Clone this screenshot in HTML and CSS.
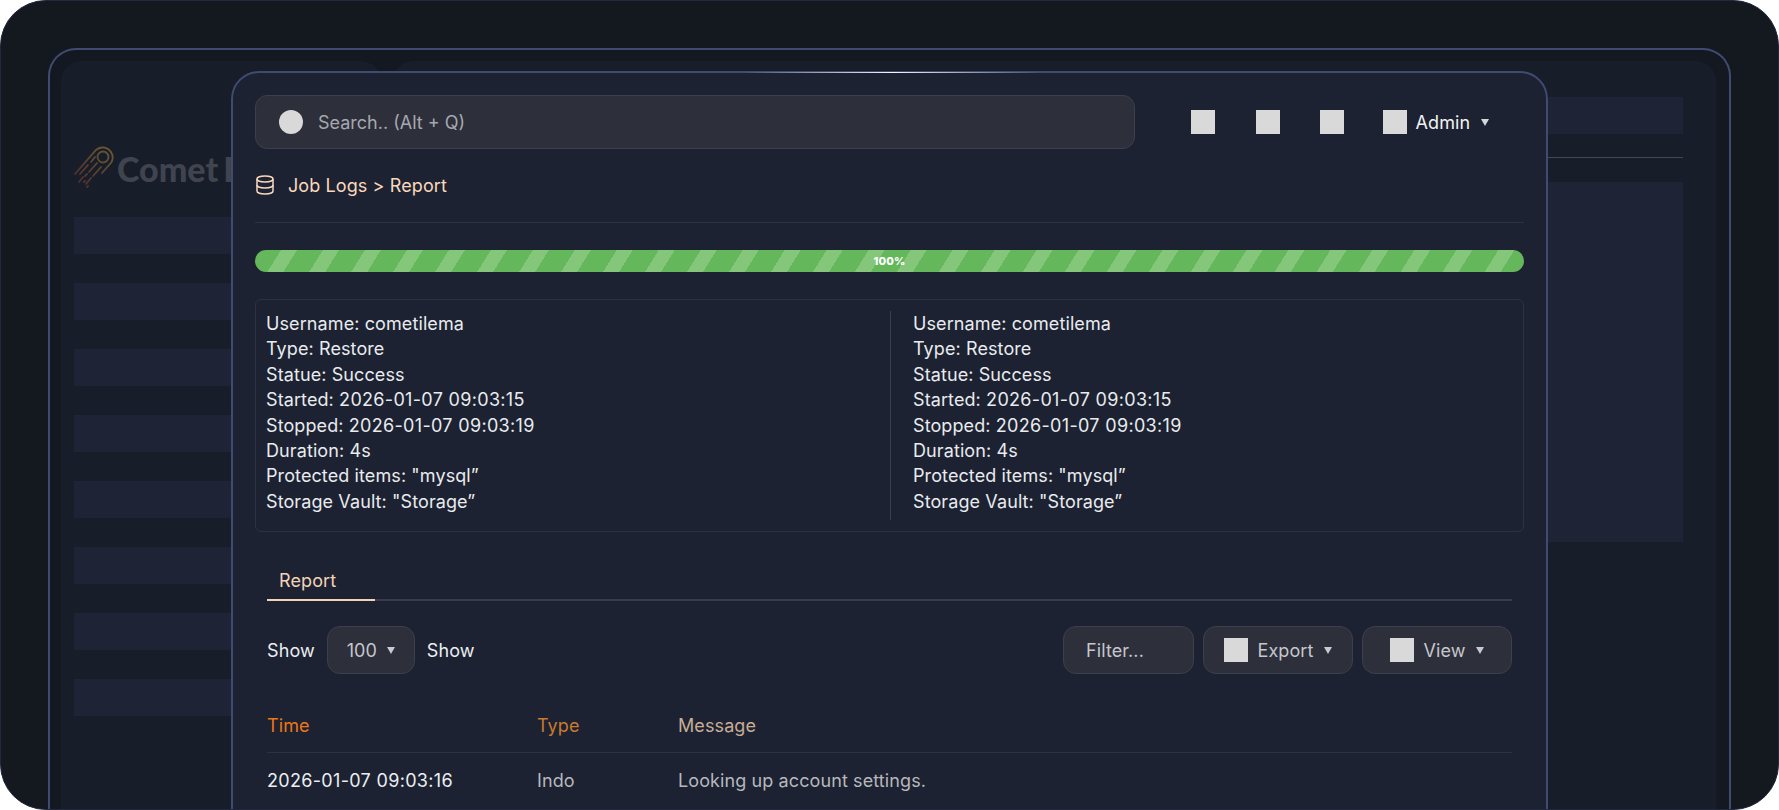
FILE: index.html
```html
<!DOCTYPE html>
<html lang="en">
<head>
<meta charset="utf-8">
<title>Job Logs Report</title>
<link rel="stylesheet" href="styles.css">
</head>
<body>
<div class="stage">
  <div class="frame">
    <aside class="side">
      <div class="logo">
        <svg class="comet" viewBox="0 0 40 42" fill="none" stroke-width="1.8" stroke-linecap="round">
          <defs>
            <linearGradient id="cg" x1="38" y1="2" x2="2" y2="40" gradientUnits="userSpaceOnUse">
              <stop offset="0" stop-color="#6b5a35"/>
              <stop offset="1" stop-color="#4e2a2a"/>
            </linearGradient>
          </defs>
          <g stroke="url(#cg)">
            <circle cx="29" cy="11" r="5.5"/>
            <path d="M38 15a10 10 0 0 0-16-11L1 28"/>
            <path d="M38 15a10 10 0 0 1-2 3L28 27"/>
            <path d="M21 11l-4 5M14 19l-8 9"/>
            <path d="M23 17l-8 9M13 28l-2 2"/>
            <path d="M27 21l-8 9M17 32l-5 6"/>
            <path d="M9 31l-4 5M11 35l-1 1M13 41l1-1"/>
          </g>
        </svg>
        <span class="logo-text">Comet Backup</span>
      </div>
      <div class="side-list">
        <div class="side-bar"></div>
        <div class="side-bar"></div>
        <div class="side-bar"></div>
        <div class="side-bar"></div>
        <div class="side-bar"></div>
        <div class="side-bar"></div>
        <div class="side-bar"></div>
        <div class="side-bar"></div>
      </div>
    </aside>
    <section class="main">
      <div class="main-top"></div>
      <div class="main-rule"></div>
      <div class="main-block"></div>
    </section>
  </div>

  <div class="modal">
    <div class="gleam"></div>
    <header class="top">
      <div class="search">
        <span class="dot"></span>
        <span>Search.. (Alt + Q)</span>
      </div>
      <div class="top-icons">
        <span class="sq"></span>
        <span class="sq"></span>
        <span class="sq"></span>
        <div class="admin">
          <span class="sq"></span>
          <span>Admin</span>
          <span class="caret caret-white"></span>
        </div>
      </div>
    </header>

    <div class="crumb">
      <svg class="db" viewBox="0 0 20 20" fill="none" stroke="#f9d9bd" stroke-width="1.5">
        <ellipse cx="10" cy="4" rx="8" ry="3"/>
        <path d="M2 4v12c0 1.700 3.600 3 8 3s8-1.300 8-3V4"/>
        <path d="M2 10c0 1.700 3.600 3 8 3s8-1.300 8-3"/>
      </svg>
      <span>Job Logs &gt; Report</span>
    </div>

    <div class="progress"><span>100%</span></div>

    <div class="info">
      <div class="info-col">
        <div>Username: cometilema</div>
        <div>Type: Restore</div>
        <div>Statue: Success</div>
        <div>Started: <span class="num">2026-01-07 09:03:15</span></div>
        <div>Stopped: <span class="num">2026-01-07 09:03:19</span></div>
        <div>Duration: 4s</div>
        <div>Protected items: "mysql”</div>
        <div>Storage Vault: "Storage”</div>
      </div>
      <div class="info-col info-right">
        <div>Username: cometilema</div>
        <div>Type: Restore</div>
        <div>Statue: Success</div>
        <div>Started: <span class="num">2026-01-07 09:03:15</span></div>
        <div>Stopped: <span class="num">2026-01-07 09:03:19</span></div>
        <div>Duration: 4s</div>
        <div>Protected items: "mysql”</div>
        <div>Storage Vault: "Storage”</div>
      </div>
    </div>

    <div class="panel">
      <div class="tabs"><span class="tab">Report</span></div>

      <div class="tools">
        <div class="tools-left">
          <span>Show</span>
          <div class="ctl ctl-num"><span>100</span><span class="caret"></span></div>
          <span>Show</span>
        </div>
        <div class="tools-right">
          <div class="ctl ctl-filter">Filter...</div>
          <div class="ctl ctl-btn"><span class="sq"></span><span>Export</span><span class="caret"></span></div>
          <div class="ctl ctl-btn"><span class="sq"></span><span>View</span><span class="caret"></span></div>
        </div>
      </div>

      <div class="row row-head">
        <span class="c-time h-time">Time</span>
        <span class="c-type h-type">Type</span>
        <span class="h-msg">Message</span>
      </div>
      <div class="row row-body">
        <span class="c-time num">2026-01-07 09:03:16</span>
        <span class="c-type muted">Indo</span>
        <span class="muted">Looking up account settings.</span>
      </div>
    </div>
  </div>
</div>
</body>
</html>
```
FILE: styles.css
```css
* { box-sizing: border-box; }
html, body { margin: 0; height: 100%; background: #fff; }
body { font-family: Inter, "Liberation Sans", sans-serif; font-size: 18px; letter-spacing: .1px; color: #eceef2; overflow: hidden; }

.stage {
  position: relative;
  width: 1779px;
  height: 810px;
  padding: 47px 47px 0;
  background: #14181f;
  border: 1px solid #222840;
  border-radius: 46px;
  overflow: hidden;
}
.frame {
  display: flex;
  gap: 12px;
  width: 1683px;
  height: 762px;
  padding: 11px 13px 0 11px;
  background: #141821;
  border: 2px solid #404b72;
  border-bottom: 0;
  border-radius: 28px 28px 0 0;
}
.side {
  width: 320px;
  padding: 85px 0 0 13px;
  background: #181d2a;
  border-radius: 20px 20px 0 0;
  overflow: hidden;
}
.logo { display: flex; align-items: center; gap: 3px; height: 41px; white-space: nowrap; }
.comet { width: 40px; height: 42px; flex: none; }
.logo-text { margin-top: 4px; font-family: Lato, sans-serif; font-weight: 900; font-size: 34px; letter-spacing: 0; word-spacing: -3px; color: #40444f; }
.side-list { display: flex; flex-direction: column; gap: 29px; margin-top: 30px; }
.side-bar { height: 37px; background: #1e2335; }

.main {
  flex: 1;
  padding: 36px 33px 0 0;
  background: #181d2a;
  border-radius: 20px 20px 0 0;
}
.main-top { height: 37px; background: #1e2335; }
.main-rule { height: 1px; margin-top: 23px; background: #45474f; }
.main-block { height: 360px; margin-top: 24px; background: #1e2335; }

.modal {
  position: absolute;
  left: 230px;
  top: 70px;
  width: 1317px;
  height: 746px;
  padding: 22px 22px 0;
  background: #1c2231;
  border: 2px solid #404b72;
  border-radius: 28px 28px 0 0;
}
.gleam {
  position: absolute;
  left: 509px;
  top: -1px;
  width: 300px;
  height: 1px;
  background: linear-gradient(90deg, rgba(255,255,255,0), rgba(255,255,255,.95) 50%, rgba(255,255,255,0));
}

.top { display: flex; align-items: center; height: 54px; }
.search {
  display: flex;
  align-items: center;
  gap: 15px;
  width: 880px;
  height: 54px;
  padding-left: 23px;
  background: #2d2f3b;
  border: 1px solid #3d3f4b;
  border-radius: 12px;
  color: #a6a8ae;
  letter-spacing: 0;
}
.dot { width: 24px; height: 24px; border-radius: 50%; background: #d9d9d9; }
.top-icons { display: flex; align-items: center; gap: 40.5px; margin-left: 56px; }
.sq { display: block; width: 24px; height: 24px; flex: none; background: #d9d9d9; }
.admin { display: flex; align-items: center; gap: 9px; color: #f2f3f5; margin-left: -2px; }

.caret {
  width: 0;
  height: 0;
  flex: none;
  margin-left: 1px;
  border-left: 4.500px solid transparent;
  border-right: 4.500px solid transparent;
  border-top: 7px solid #c9cacd;
}
.caret-white { border-top-color: #d5d6d8; margin-left: 2px; }

.crumb {
  display: flex;
  align-items: center;
  gap: 13px;
  height: 74px;
  border-bottom: 1px solid #2d3141;
  color: #f9d9bd;
}
.db { width: 20px; height: 20px; flex: none; margin-top: -1px; }

.progress {
  display: flex;
  align-items: center;
  justify-content: center;
  height: 22px;
  margin-top: 27px;
  border-radius: 11px;
  background: repeating-linear-gradient(122deg, #65b75c 0 22px, #84c77b 22px 35.600px);
  font-weight: 800;
  font-size: 11px;
  color: #fff;
}

.info {
  display: flex;
  height: 233px;
  margin-top: 27px;
  padding: 11px 0;
  border: 1px solid #2d3141;
  border-radius: 6px;
}
.info-col { width: 634px; padding-left: 10px; line-height: 25.400px; color: #e9ebef; }
.info-right { width: auto; flex: 1; padding-left: 22px; border-left: 1px solid #3a3d4a; }
.num { letter-spacing: .32px; }

.panel { padding: 0 12px; }
.tabs { margin-top: 41px; border-bottom: 2px solid #3a3c49; height: 28px; display: flex; }
.tab { width: 108px; height: 28px; padding-left: 12px; line-height: 16px; color: #f3d3b8; border-bottom: 2px solid #f3d3b8; }

.tools { display: flex; justify-content: space-between; align-items: center; margin-top: 25px; height: 48px; }
.tools-left { display: flex; align-items: center; gap: 12px; color: #eceef2; }
.tools-right { display: flex; align-items: center; gap: 9px; }
.ctl {
  display: flex;
  align-items: center;
  height: 48px;
  background: #2d2f3b;
  border: 1px solid #3d3f4b;
  border-radius: 13px;
  color: #c6c7cc;
}
.ctl-num { width: 88px; justify-content: center; gap: 9px; }
.ctl-filter { width: 131px; padding-left: 22px; }
.ctl-btn { width: 150px; justify-content: center; gap: 9px; }

.row { display: flex; align-items: center; border-bottom: 1px solid #2d3141; }
.row-head { height: 57px; margin-top: 22px; padding-top: 3px; }
.row-body { height: 54px; border-bottom: 0; }
.c-time { width: 270px; }
.c-type { width: 141px; }
.h-time { color: #ec7716; }
.h-type { color: #c87a2e; }
.h-msg { color: #c9ad97; }
.muted { color: #b7b8bd; }
```
